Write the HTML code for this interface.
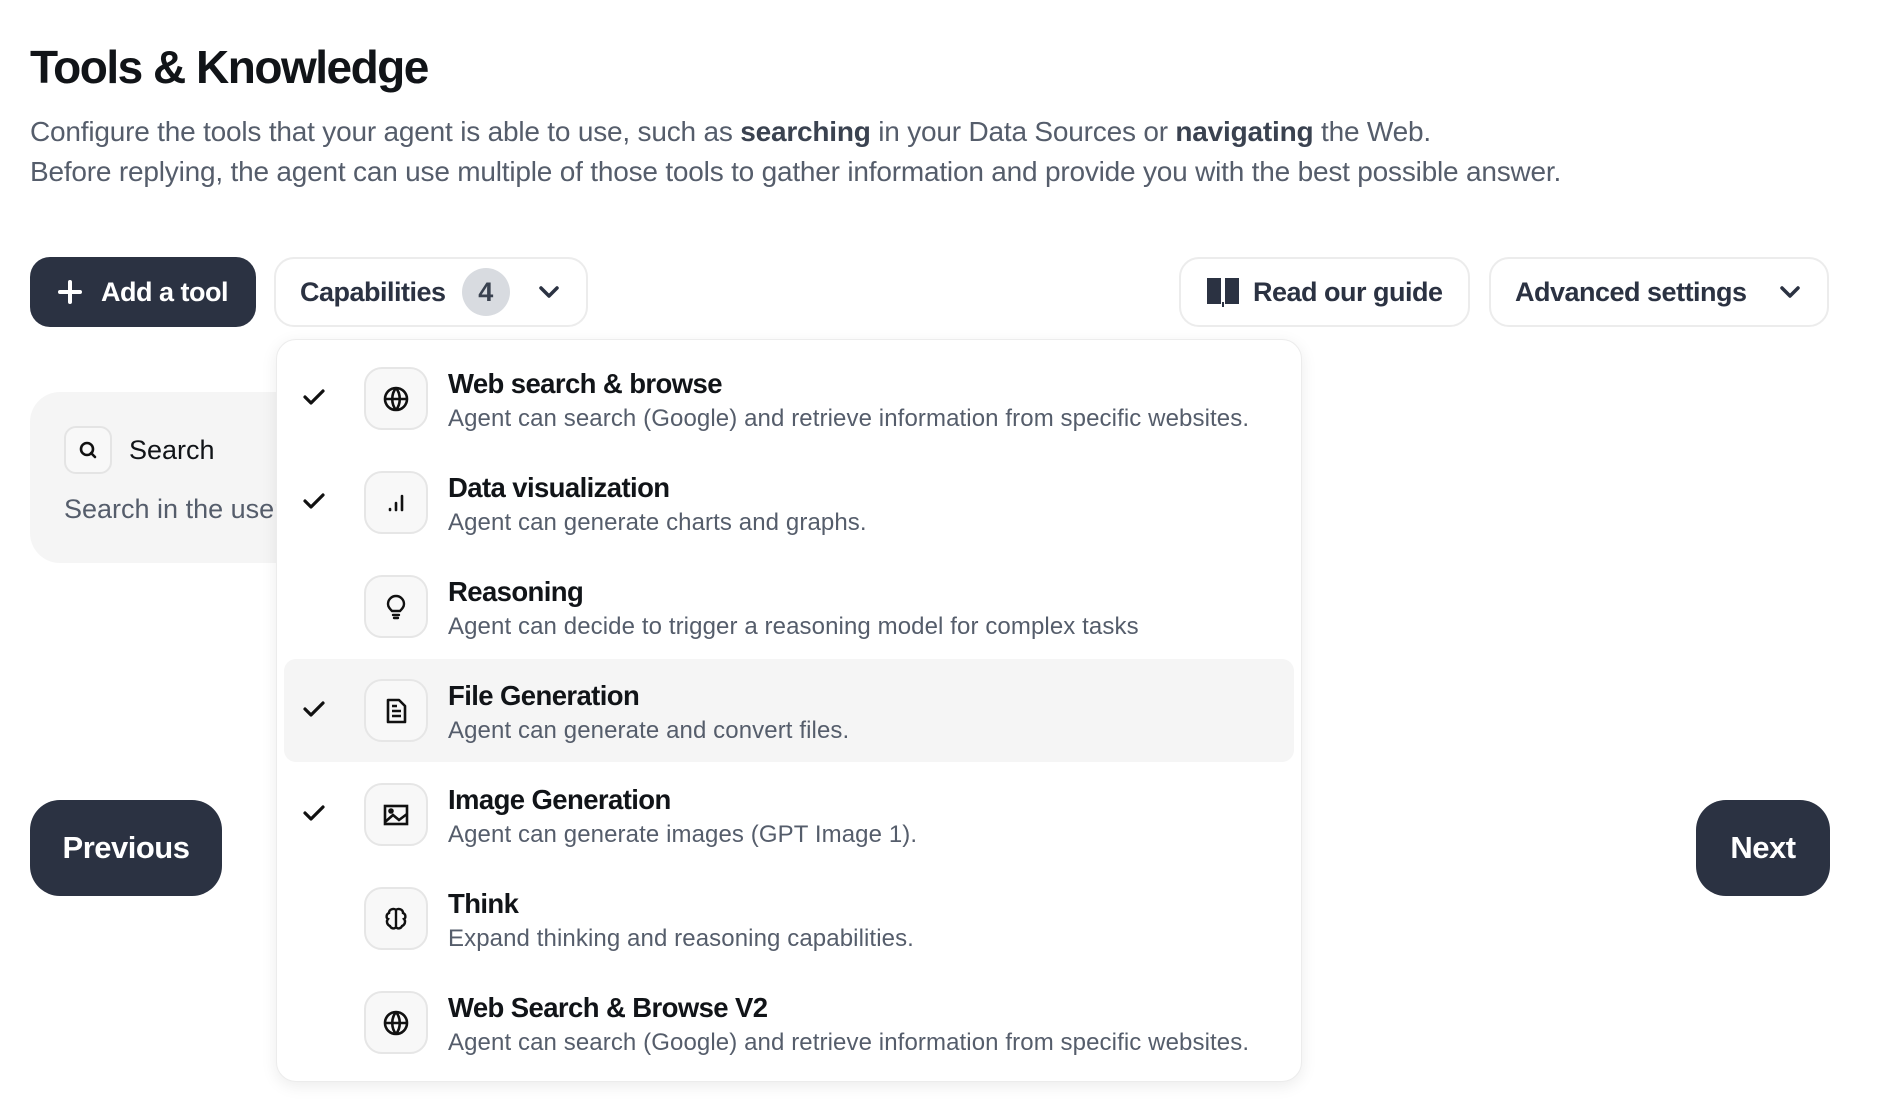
<!DOCTYPE html>
<html><head><meta charset="utf-8"><style>
*{box-sizing:border-box;margin:0;padding:0}
body{width:1904px;height:1118px;background:#fff;font-family:"Liberation Sans",sans-serif;position:relative;overflow:hidden;color:#111418}
.abs{position:absolute}
h1{position:absolute;left:30px;top:40px;font-size:46px;font-weight:700;letter-spacing:-1.5px;color:#111418}
.desc{position:absolute;left:30px;top:112px;font-size:28px;line-height:40px;color:#555d6b;letter-spacing:-0.2px}
.desc b{color:#3a4250}
.btn{position:absolute;height:70px;border-radius:20px;display:flex;align-items:center;font-size:27px;font-weight:700;letter-spacing:-0.5px}
.dark{background:#2b3242;color:#fff}
.outl{border:2px solid #ececec;color:#2b3242;background:#fff}
.panel{position:absolute;left:276px;top:339px;width:1026px;height:743px;background:#fff;border:1px solid #ececec;border-radius:20px;box-shadow:0 4px 16px rgba(0,0,0,0.08)}
.row{position:absolute;left:7px;width:1010px;height:103px;border-radius:12px}
.row.hl{background:#f5f5f5}
.chk{position:absolute;left:18px;top:40px}
.ib{position:absolute;left:80px;top:20px;width:64px;height:63px;border:2px solid #e6e6e6;border-radius:18px;background:#f8f8f8;display:flex;align-items:center;justify-content:center}
.t{position:absolute;left:164px;top:21px;font-size:27.5px;font-weight:700;letter-spacing:-0.6px;color:#111418}
.d{position:absolute;left:164px;top:58px;font-size:24px;color:#555d6b;letter-spacing:0.1px}
</style></head><body>
<h1>Tools &amp; Knowledge</h1>
<div class="desc">Configure the tools that your agent is able to use, such as <b>searching</b> in your Data Sources or <b>navigating</b> the Web.<br>Before replying, the agent can use multiple of those tools to gather information and provide you with the best possible answer.</div>

<div class="btn dark" style="left:30px;top:257px;width:226px;padding-left:27px"><svg width="26" height="26" viewBox="0 0 26 26"><path d="M13 3v20M3 13h20" stroke="#fff" stroke-width="4" stroke-linecap="round"/></svg><span style="margin-left:18px">Add a tool</span></div>
<div class="btn outl" style="left:274px;top:257px;width:314px;padding-left:24px;font-weight:600">Capabilities<span style="margin-left:16px;width:48px;height:48px;border-radius:24px;background:#d8dbe0;display:flex;align-items:center;justify-content:center;color:#3a4250">4</span><svg style="margin-left:28px" width="22" height="14" viewBox="0 0 22 14"><path d="M3 3l8 8 8-8" stroke="#2b3242" stroke-width="3.5" fill="none" stroke-linecap="round" stroke-linejoin="round"/></svg></div>
<div class="btn outl" style="left:1179px;top:257px;width:291px;padding-left:24px"><svg width="36" height="32" viewBox="0 0 36 32"><path d="M2 2h14v26H2zM20 2h14v26H20z" fill="#2b3242"/><rect x="17" y="26" width="2" height="5" fill="#2b3242"/></svg><span style="margin-left:12px">Read our guide</span></div>
<div class="btn outl" style="left:1489px;top:257px;width:340px;padding-left:24px">Advanced settings<svg style="margin-left:32px" width="22" height="14" viewBox="0 0 22 14"><path d="M3 3l8 8 8-8" stroke="#2b3242" stroke-width="3.5" fill="none" stroke-linecap="round" stroke-linejoin="round"/></svg></div>

<div class="abs" style="left:30px;top:392px;width:300px;height:171px;background:#f5f5f5;border-radius:30px"></div>
<div class="abs" style="left:64px;top:426px;width:48px;height:48px;border:2px solid #e4e4e4;border-radius:12px;display:flex;align-items:center;justify-content:center;background:#f8f8f8"><svg width="20" height="20" viewBox="0 0 20 20"><circle cx="9" cy="9" r="6" stroke="#111" stroke-width="2.6" fill="none"/><path d="M13 13l4 4" stroke="#111" stroke-width="2.6" stroke-linecap="round"/></svg></div>
<div class="abs" style="left:129px;top:435px;font-size:27px;color:#111418">Search</div>
<div class="abs" style="left:64px;top:494px;font-size:27px;color:#555d6b;white-space:nowrap">Search in the user</div>

<div class="btn dark" style="left:30px;top:800px;width:192px;height:96px;border-radius:30px;justify-content:center;font-size:31px">Previous</div>
<div class="btn dark" style="left:1696px;top:800px;width:134px;height:96px;border-radius:30px;justify-content:center;font-size:31px">Next</div>

<div class="panel">
<div class="row" style="top:7px"><svg class="chk" width="24" height="20" viewBox="0 0 24 20"><path d="M3 10l6 6L21 4" stroke="#111" stroke-width="3.2" fill="none" stroke-linecap="round" stroke-linejoin="round"/></svg><div class="ib"><svg width="28" height="28" viewBox="0 0 28 28" fill="none" stroke="#111" stroke-width="2.6"><circle cx="14" cy="14" r="11"/><path d="M3 14h22M14 3c-5 6-5 16 0 22M14 3c5 6 5 16 0 22"/></svg></div><div class="t">Web search &amp; browse</div><div class="d">Agent can search (Google) and retrieve information from specific websites.</div></div>
<div class="row" style="top:111px"><svg class="chk" width="24" height="20" viewBox="0 0 24 20"><path d="M3 10l6 6L21 4" stroke="#111" stroke-width="3.2" fill="none" stroke-linecap="round" stroke-linejoin="round"/></svg><div class="ib"><svg width="28" height="28" viewBox="0 0 28 28" stroke="#111" stroke-width="2.6" stroke-linecap="round"><path d="M8 20v1M14 14v7M20 7v14"/></svg></div><div class="t">Data visualization</div><div class="d">Agent can generate charts and graphs.</div></div>
<div class="row" style="top:215px"><div class="ib"><svg width="28" height="28" viewBox="0 0 28 28" fill="none" stroke="#111" stroke-width="2.4" stroke-linecap="round"><path d="M10 18c-2-2-4-4-4-7a8 8 0 0 1 16 0c0 3-2 5-4 7z"/><path d="M11 22h6M12 25h4"/></svg></div><div class="t">Reasoning</div><div class="d">Agent can decide to trigger a reasoning model for complex tasks</div></div>
<div class="row hl" style="top:319px"><svg class="chk" width="24" height="20" viewBox="0 0 24 20"><path d="M3 10l6 6L21 4" stroke="#111" stroke-width="3.2" fill="none" stroke-linecap="round" stroke-linejoin="round"/></svg><div class="ib"><svg width="28" height="28" viewBox="0 0 28 28" fill="none" stroke="#111" stroke-width="2.6" stroke-linejoin="round"><path d="M6 3h11l6 6v16H6z"/><path d="M10 14h9M10 19h9M10 9h5"/></svg></div><div class="t">File Generation</div><div class="d">Agent can generate and convert files.</div></div>
<div class="row" style="top:423px"><svg class="chk" width="24" height="20" viewBox="0 0 24 20"><path d="M3 10l6 6L21 4" stroke="#111" stroke-width="3.2" fill="none" stroke-linecap="round" stroke-linejoin="round"/></svg><div class="ib"><svg width="28" height="28" viewBox="0 0 28 28" fill="none" stroke="#111" stroke-width="2.6"><rect x="3" y="5" width="22" height="18"/><path d="M3 21l8-7 6 5 8-6"/><circle cx="9" cy="10" r="1.5" fill="#111"/></svg></div><div class="t">Image Generation</div><div class="d">Agent can generate images (GPT Image 1).</div></div>
<div class="row" style="top:527px"><div class="ib"><svg width="28" height="28" viewBox="0 0 28 28" fill="none" stroke="#111" stroke-width="2.4"><path d="M14 5c-2-2-7-1-7 3-3 1-3 5-1 6-2 2-1 6 2 7 1 3 5 3 6 1zM14 5c2-2 7-1 7 3 3 1 3 5 1 6 2 2 1 6-2 7-1 3-5 3-6 1z"/></svg></div><div class="t">Think</div><div class="d">Expand thinking and reasoning capabilities.</div></div>
<div class="row" style="top:631px"><div class="ib"><svg width="28" height="28" viewBox="0 0 28 28" fill="none" stroke="#111" stroke-width="2.6"><circle cx="14" cy="14" r="11"/><path d="M3 14h22M14 3c-5 6-5 16 0 22M14 3c5 6 5 16 0 22"/></svg></div><div class="t">Web Search &amp; Browse V2</div><div class="d">Agent can search (Google) and retrieve information from specific websites.</div></div>
</div>
</body></html>
